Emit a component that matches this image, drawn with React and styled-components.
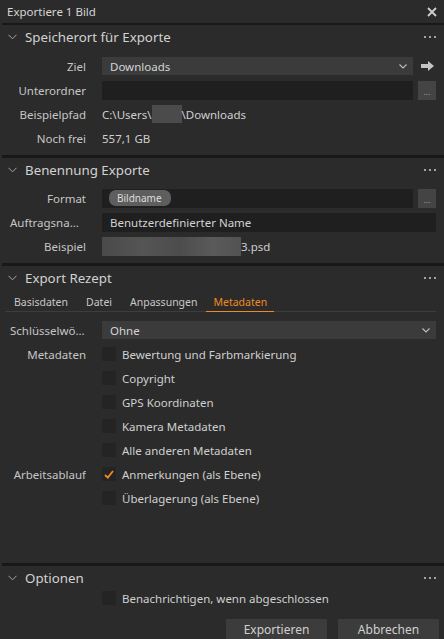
import React from "react";
import styled, { createGlobalStyle } from "styled-components";

const Global = createGlobalStyle`
  html, body { margin: 0; padding: 0; background: #2b2b2b; }
  body { font-family: "Noto Sans", "Open Sans", sans-serif; font-size: 11.5px; color: #c9c9c9; }
  * { box-sizing: border-box; }
`;

const Chevron = () => (
  <svg width="9" height="6" viewBox="0 0 9 6">
    <path d="M0.5 0.8 L4.5 4.8 L8.5 0.8" fill="none" stroke="#a8a8a8" strokeWidth="1" />
  </svg>
);

const Caret = () => (
  <svg width="8" height="5" viewBox="0 0 8 5">
    <path d="M0.5 0.5 L4 4 L7.5 0.5" fill="none" stroke="#bdbdbd" strokeWidth="1.1" />
  </svg>
);

const Dots = () => (
  <svg width="12" height="3" viewBox="0 0 12 3">
    <rect x="0" y="0" width="2" height="2" fill="#a4a4a4" />
    <rect x="5" y="0" width="2" height="2" fill="#a4a4a4" />
    <rect x="10" y="0" width="2" height="2" fill="#a4a4a4" />
  </svg>
);

const ArrowRight = () => (
  <svg width="13" height="10" viewBox="0 0 13 10">
    <path d="M0 3 H7 V0 L13 5 L7 10 V7 H0 Z" fill="#c4c4c4" />
  </svg>
);

const Close = () => (
  <svg width="10" height="10" viewBox="0 0 10 10">
    <path d="M1 1 L9 9 M9 1 L1 9" stroke="#d0d0d0" strokeWidth="1.8" />
  </svg>
);

const Tick = () => (
  <svg width="10" height="9" viewBox="0 0 10 9">
    <path d="M1 5 L3.8 7.6 L9 1" fill="none" stroke="#f08a24" strokeWidth="1.8" />
  </svg>
);

const Window = styled.div`
  width: 444px;
  height: 639px;
  display: flex;
  flex-direction: column;
  background: #2b2b2b;
  overflow: hidden;
`;

const TitleBar = styled.div`
  height: 23px;
  padding: 0 7px 0 7px;
  display: flex;
  align-items: center;
  justify-content: space-between;
  color: #d6d6d6;
  font-size: 11.5px;
`;

const Divider = styled.div`
  height: ${(p) => p.$h || 3}px;
  background: #181818;
  margin: 0 0 0 ${(p) => p.$inset || 0}px;
`;

const Header = styled.div`
  height: 24px;
  display: flex;
  align-items: center;
  padding: 0 8px 0 8px;
  gap: 8px;
  font-size: 13.3px;
  color: #d2d2d2;
  span { flex: 1; }
`;

const Body = styled.div`
  display: flex;
  flex-direction: column;
  padding: ${(p) => p.$pad || "5px 8px 5px 0"};
`;

const Row = styled.div`
  display: grid;
  grid-template-columns: 86px 1fr;
  column-gap: 16px;
  align-items: center;
  height: ${(p) => p.$h || 24}px;
`;

const Label = styled.div`
  text-align: right;
  padding-left: 10px;
  white-space: nowrap;
  overflow: hidden;
  text-overflow: ellipsis;
  color: #c6c6c6;
`;

const Line = styled.div`
  display: flex;
  align-items: center;
  gap: 5px;
`;

const Select = styled.div`
  flex: 1;
  height: 18px;
  background: #3b3b3b;
  display: flex;
  align-items: center;
  justify-content: space-between;
  padding: 0 6px 0 8px;
  color: #d4d4d4;
`;

const Input = styled.div`
  flex: 1;
  height: 19px;
  background: #1f1f1f;
  display: flex;
  align-items: center;
  padding: 0 8px;
  color: #d2d2d2;
`;

const SideSlot = styled.div`
  width: 18px;
  height: ${(p) => p.$h || 18}px;
  display: flex;
  align-items: ${(p) => (p.$button ? "flex-end" : "center")};
  justify-content: center;
  padding-bottom: ${(p) => (p.$button ? 4 : 0)}px;
  background: ${(p) => (p.$button ? "#444444" : "transparent")};
  color: #999;
  font-size: 9px;
  line-height: 1;
`;

const Chip = styled.span`
  background: #5e5e5e;
  color: #dcdcdc;
  font-size: 10px;
  border-radius: 7px;
  padding: 1px 9px 1px 8px;
  margin-left: -1px;
`;

const Blur = styled.span`
  display: inline-block;
  width: ${(p) => p.$w}px;
  height: ${(p) => p.$h}px;
  background: ${(p) => p.$bg || "#4e4e4e"};
`;

const Value = styled.div`
  display: flex;
  align-items: center;
  color: #cfcfcf;
  white-space: nowrap;
`;

const Tabs = styled.div`
  display: flex;
  margin: 0 8px 0 5px;
  border-bottom: 1px solid #3d3d3d;
  height: 22px;
  align-items: stretch;
`;

const Tab = styled.div`
  padding: 2px ${(p) => (p.$active ? 7 : 9)}px 0;
  display: flex;
  align-items: center;
  color: ${(p) => (p.$active ? "#f08a24" : "#c8c8c8")};
  border-bottom: 1px solid ${(p) => (p.$active ? "#f08a24" : "transparent")};
  margin-bottom: -1px;
  font-size: 10.5px;
`;

const Check = styled.div`
  display: flex;
  align-items: center;
  gap: 6px;
  color: #cfcfcf;
`;

const Box = styled.span`
  width: 14px;
  height: 14px;
  background: #242424;
  display: flex;
  align-items: center;
  justify-content: center;
`;

const Spacer = styled.div`
  flex: 1;
`;

const Footer = styled.div`
  display: flex;
  justify-content: flex-end;
  gap: 11px;
  padding: 13px 5px 0 0;
`;

const Button = styled.div`
  width: 101px;
  height: 20px;
  background: #3c3c3c;
  display: flex;
  align-items: center;
  justify-content: center;
  color: #d0d0d0;
  font-size: 12px;
`;

const Checkbox = ({ checked, children }) => (
  <Check>
    <Box>{checked && <Tick />}</Box>
    {children}
  </Check>
);

const SectionHeader = ({ title }) => (
  <Header>
    <Chevron />
    <span>{title}</span>
    <Dots />
  </Header>
);

const metadata = [
  "Bewertung und Farbmarkierung",
  "Copyright",
  "GPS Koordinaten",
  "Kamera Metadaten",
  "Alle anderen Metadaten",
];

export default function App() {
  return (
    <>
      <Global />
      <Window>
        <TitleBar>
          <span>Exportiere 1 Bild</span>
          <Close />
        </TitleBar>
        <Divider $h={2} $inset={2} />

        <SectionHeader title="Speicherort für Exporte" />
        <Body>
          <Row>
            <Label>Ziel</Label>
            <Line>
              <Select>
                Downloads
                <Caret />
              </Select>
              <SideSlot>
                <ArrowRight />
              </SideSlot>
            </Line>
          </Row>
          <Row>
            <Label>Unterordner</Label>
            <Line>
              <Input />
              <SideSlot $button $h={19}>...</SideSlot>
            </Line>
          </Row>
          <Row>
            <Label>Beispielpfad</Label>
            <Value>
              C:\Users\
              <Blur $w={30} $h={18} $bg="#4b4b4b" />
              \Downloads
            </Value>
          </Row>
          <Row>
            <Label>Noch frei</Label>
            <Value>557,1 GB</Value>
          </Row>
        </Body>
        <Divider $inset={2} />

        <SectionHeader title="Benennung Exporte" />
        <Body $pad="4px 8px 5px 0">
          <Row>
            <Label>Format</Label>
            <Line>
              <Input>
                <Chip>Bildname</Chip>
              </Input>
              <SideSlot $button $h={19}>...</SideSlot>
            </Line>
          </Row>
          <Row>
            <Label>Auftragsname</Label>
            <Line>
              <Input>Benutzerdefinierter Name</Input>
            </Line>
          </Row>
          <Row>
            <Label>Beispiel</Label>
            <Value>
              <Blur $w={139} $h={19} $bg="linear-gradient(90deg,#4a4a4a,#555 30%,#4c4c4c 55%,#5a5a5a 80%,#525252)" />
              3.psd
            </Value>
          </Row>
        </Body>
        <Divider $inset={2} />

        <SectionHeader title="Export Rezept" />
        <Tabs>
          <Tab>Basisdaten</Tab>
          <Tab>Datei</Tab>
          <Tab>Anpassungen</Tab>
          <Tab $active>Metadaten</Tab>
        </Tabs>
        <Body $pad="6px 8px 0 0">
          <Row>
            <Label>Schlüsselwörter</Label>
            <Line>
              <Select>
                Ohne
                <Caret />
              </Select>
            </Line>
          </Row>
          {metadata.map((m, i) => (
            <Row key={m}>
              <Label>{i === 0 ? "Metadaten" : ""}</Label>
              <Checkbox>{m}</Checkbox>
            </Row>
          ))}
          <Row>
            <Label>Arbeitsablauf</Label>
            <Checkbox checked>Anmerkungen (als Ebene)</Checkbox>
          </Row>
          <Row>
            <Label />
            <Checkbox>Überlagerung (als Ebene)</Checkbox>
          </Row>
        </Body>
        <Spacer />
        <Divider $inset={2} />

        <SectionHeader title="Optionen" />
        <Body $pad="0 8px 0 0">
          <Row $h={16}>
            <Label />
            <Checkbox>Benachrichtigen, wenn abgeschlossen</Checkbox>
          </Row>
        </Body>
        <Footer>
          <Button>Exportieren</Button>
          <Button>Abbrechen</Button>
        </Footer>
      </Window>
    </>
  );
}
